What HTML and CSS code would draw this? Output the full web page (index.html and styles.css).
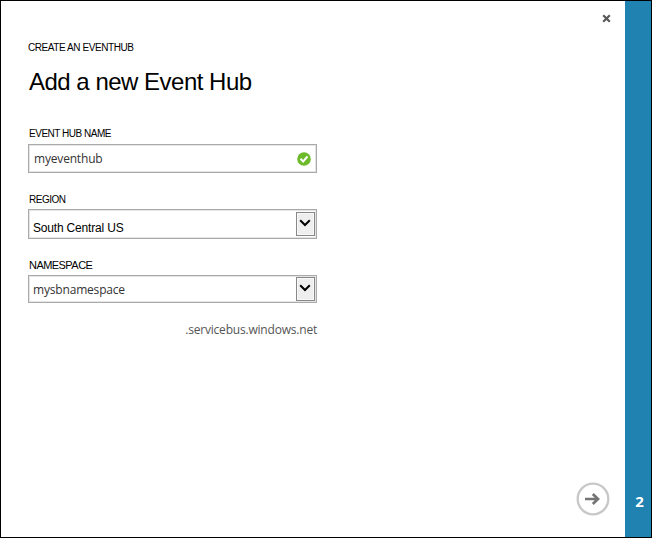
FILE: index.html
```html
<!DOCTYPE html>
<html lang="en">
<head>
<meta charset="utf-8">
<title>Add a new Event Hub</title>
<link rel="stylesheet" href="styles.css">
</head>
<body>
<div class="dialog">
  <main class="content">
    <svg class="close" viewBox="0 0 9 9"><path d="M1.2 1.2 7.8 7.8M7.8 1.2 1.2 7.8"/></svg>
    <div class="crumb"><span>CREATE AN EVENTHUB</span></div>
    <h1><span>Add a new Event Hub</span></h1>
    <form class="form">
      <label class="label name-label"><span>EVENT HUB NAME</span></label>
      <div class="field name-field">
        <span class="value name-value">myeventhub</span>
        <svg class="check" viewBox="0 0 14 14"><circle cx="7" cy="7" r="6.8"/><path d="M3.5 6.8 6.1 9.5 10.5 4.5"/></svg>
      </div>
      <label class="label region-label"><span>REGION</span></label>
      <div class="field region-field">
        <span class="value region-value">South Central US</span>
        <span class="drop"><svg viewBox="0 0 12 8"><path d="M1.2 1.3 6 6 10.8 1.3"/></svg></span>
      </div>
      <label class="label space-label"><span>NAMESPACE</span></label>
      <div class="field space-field">
        <span class="value space-value">mysbnamespace</span>
        <span class="drop"><svg viewBox="0 0 12 8"><path d="M1.2 1.3 6 6 10.8 1.3"/></svg></span>
      </div>
      <div class="suffix"><span>.servicebus.windows.net</span></div>
    </form>
    <svg class="next" viewBox="0 0 34 34"><circle cx="17" cy="17" r="15.3"/><path d="M9 17H21.5M16.8 12 22 17 16.8 22"/></svg>
  </main>
  <aside class="step">2</aside>
</div>
</body>
</html>
```

FILE: styles.css
```css
* { box-sizing: border-box; }
body { margin: 0; background: #fff; font-family: "Liberation Sans", Arial, sans-serif; color: #000; }
.dialog { display: flex; width: 652px; height: 538px; border: 1px solid #000; }
.content { display: flex; flex-direction: column; flex: 1; padding: 13px 15px 21px 27px; }
svg { display: block; flex: none; }
.close { align-self: flex-end; width: 9px; height: 9px; margin-right: -1px; stroke: #595959; stroke-width: 2.2; fill: none; }
.crumb { height: 14px; margin-top: 18px; font-size: 10px; line-height: 14px; letter-spacing: -0.42px; white-space: nowrap; }
h1 { height: 28px; margin: 13px 0 0 1px; font-size: 24px; font-weight: 400; line-height: 28px; letter-spacing: -0.5px; white-space: nowrap; }
.form { width: 289px; margin-top: 31px; }
.label { display: block; height: 14px; padding-left: 1px; font-size: 10px; line-height: 14px; letter-spacing: -0.48px; white-space: nowrap; }
.field { display: flex; align-items: center; justify-content: space-between; border: 1px solid #aaa; box-shadow: inset 0 0 0 1px #e4e4e4; }
.name-field { height: 29px; margin-top: 3px; padding: 0 5px; }
.region-label { margin-top: 20px; }
.region-field { height: 30px; margin-top: 2px; padding: 0 1px 0 4px; }
.space-label { margin-top: 19px; font-size: 11px; letter-spacing: -0.55px; }
.space-field { height: 28px; margin-top: 3px; padding: 0 1px 0 4px; }
.value { font: 12px/18px "Open Sans", sans-serif; color: #333; letter-spacing: -0.18px; }
.name-value { padding-top: 1px; }
.space-value { padding-top: 1px; }
.region-value { font: 12px/18px "Liberation Sans", sans-serif; color: #000; padding-top: 7px; letter-spacing: -0.18px; }
.check { width: 14px; height: 14px; }
.check circle { fill: #6dbb2a; }
.check path { fill: none; stroke: #fff; stroke-width: 2; }
.drop { display: flex; align-items: center; justify-content: center; width: 19px; height: 24px; padding: 0 2px 2px 0; border: 1px solid #888; background: #eee; box-shadow: inset 0 0 0 1px #f8f8f8; }
.drop svg { width: 12px; height: 8px; fill: none; stroke: #000; stroke-width: 2; }
.suffix { margin-top: 18px; font: 12px/18px "Open Sans", sans-serif; color: #555; text-align: right; letter-spacing: -0.2px; }
.next { width: 34px; height: 34px; margin-top: auto; align-self: flex-end; fill: none; }
.next circle { stroke: #c8c8c8; stroke-width: 2.3; }
.next path { stroke: #757575; stroke-width: 2.7; }
.step { display: flex; align-items: flex-end; justify-content: center; width: 26px; padding: 0 0 26px 3px; background: #1f82b0; color: #fff; font: 700 15px/20px "Open Sans", sans-serif; }
```
